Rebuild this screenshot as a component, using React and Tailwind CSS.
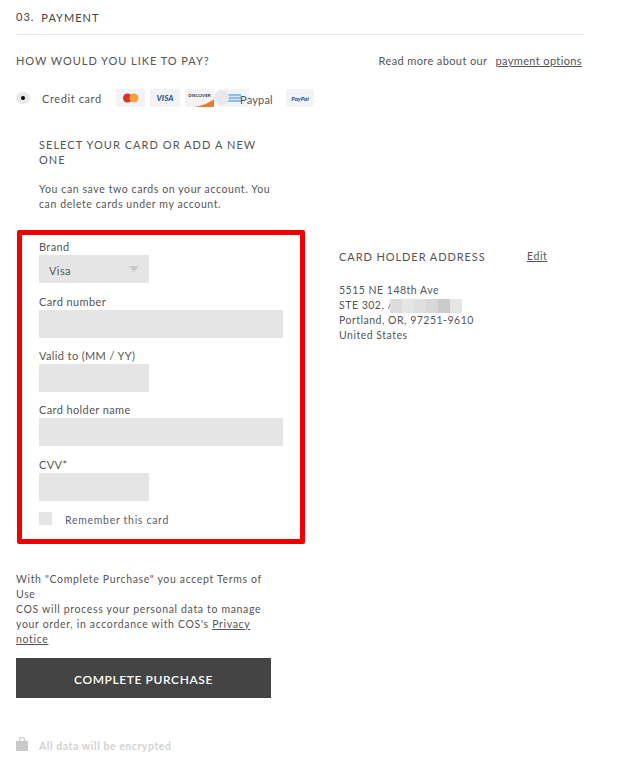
const font = { fontFamily: "Lato, 'Open Sans', sans-serif" };

function Field({ label, wide, gap, children }) {
  return (
    <div className={gap}>
      <div className="h-[16px] text-[11px] leading-[16px] tracking-[0.38px] text-[#555]">{label}</div>
      <div className={"h-[28px] bg-[#e5e5e5] " + (wide ? "w-[244px]" : "w-[110px]")}>{children}</div>
    </div>
  );
}

function CardChip({ className, children }) {
  return <div className={"relative h-[18px] overflow-hidden rounded-[1px] bg-[#f3f3f5] flex items-center justify-center " + className}>{children}</div>;
}

export default function App() {
  return (
    <div className="h-[760px] w-[622px] overflow-hidden bg-white pl-4 text-[#555]" style={font}>
      <div className="flex h-[35px] w-[568px] items-start border-b border-[#e6e6e6] pt-[11px] text-[11px] leading-[14px] tracking-[1px] text-[#444]">
        <span className="-mt-[1px] mr-[7px]">03.</span>
        <span>PAYMENT</span>
      </div>

      <div className="mt-[19px] flex h-[14px] w-[566px] items-center justify-between text-[11px] leading-[14px]">
        <span className="tracking-[0.95px]">HOW WOULD YOU LIKE TO PAY?</span>
        <span className="tracking-[0.38px]">
          Read more about our <a className="ml-[5px] underline">payment options</a>
        </span>
      </div>

      <div className="relative mt-[21px] flex h-[18px] items-center">
        <div className="flex h-[12px] w-[14px] items-center justify-center rounded-full bg-[#e9e9e9]">
          <div className="h-[4px] w-[4px] rounded-full bg-black" />
        </div>
        <span className="ml-[12px] mt-[2px] w-[74px] text-[11px] tracking-[0.6px]">Credit card</span>
        <CardChip className="w-[29px]">
          <svg width="18" height="10" viewBox="0 0 18 10">
            <circle cx="5.5" cy="5" r="4.5" fill="#d9322a" />
            <circle cx="12" cy="5" r="4.5" fill="#f3a13c" />
          </svg>
        </CardChip>
        <CardChip className="ml-[5px] w-[30px]">
          <span className="text-[8px] font-black italic text-[#2b5b94]">VISA</span>
        </CardChip>
        <CardChip className="ml-[5px] w-[29px]">
          <span className="text-[4.5px] font-bold leading-none text-[#333] -mt-[3px]">DISCOVER</span>
          <svg className="absolute bottom-0 right-0" width="20" height="8" viewBox="0 0 20 8">
            <path d="M0 8 C8 7 15 4 20 0 V8 Z" fill="#e77c2e" />
          </svg>
        </CardChip>
        <CardChip className="ml-[4px] w-[31px]">
          <svg className="-ml-[4px]" width="18" height="8" viewBox="0 0 18 8">
            <rect width="18" height="8" fill="#8ebde6" />
            <path d="M0 2.5H18M0 5.5H18" stroke="#d6e6f4" strokeWidth="1" />
          </svg>
        </CardChip>
        <div className="absolute left-[198px] top-[1px] h-[15px] w-[15px] rounded-full bg-[#e9e9e9]" />
        <span className="absolute left-[224px] top-[3px] text-[11px] leading-[16px] tracking-[0.2px]">Paypal</span>
        <CardChip className="ml-[37px] w-[28px]">
          <span className="text-[6px] font-black italic text-[#2b5b94]">PayPal</span>
        </CardChip>
      </div>

      <div className="ml-[23px] mt-[30px] w-[240px] text-[11px] leading-[15px] tracking-[1.05px]">
        SELECT YOUR CARD OR ADD A NEW ONE
      </div>
      <div className="ml-[23px] mt-[15px] w-[240px] text-[10.5px] leading-[15px] tracking-[0.6px]">
        You can save two cards on your account. You can delete cards under my account.
      </div>

      <div className="mt-[18px] flex items-start">
        <div className="ml-[1px] h-[314px] w-[288px] rounded-[2px] border-[5px] border-[#f00000] pl-[17px] pt-[4px]">
          <Field label="Brand" gap="mb-[11px]">
            <div className="relative flex h-full items-center pl-[10px] pt-[4px] text-[11px] tracking-[0.4px]">
              Visa
              <div className="absolute right-[10px] top-[11px] h-0 w-0 border-x-[5px] border-t-[6px] border-x-transparent border-t-[#c9c9c9]" />
            </div>
          </Field>
          <Field label="Card number" wide gap="mb-[10px]" />
          <Field label="Valid to (MM / YY)" gap="mb-[10px]" />
          <Field label="Card holder name" wide gap="mb-[11px]" />
          <Field label="CVV*" gap="mb-[11px]" />
          <div className="flex h-[13px] items-center">
            <div className="h-[13px] w-[13px] bg-[#e5e5e5]" />
            <span className="ml-[13px] mt-[5px] text-[10.5px] tracking-[0.7px] text-[#5a6270]">Remember this card</span>
          </div>
        </div>

        <div className="ml-[34px] pt-[19px] text-[10.5px] leading-[15px]">
          <div className="flex h-[15px] items-center">
            <span className="w-[188px] text-[11px] tracking-[0.92px]">CARD HOLDER ADDRESS</span>
            <a className="tracking-[0.6px] underline">Edit</a>
          </div>
          <div className="mt-[19px] tracking-[0.5px]">
            <div>5515 NE 148th Ave</div>
            <div className="flex items-center">
              STE 302, /
              <div className="-ml-[3px] flex h-[14px]">
                <div className="w-[12px] bg-[#dcdcdc]" />
                <div className="w-[12px] bg-[#e4e6e2]" />
                <div className="w-[12px] bg-[#dfdfdf]" />
                <div className="w-[12px] bg-[#d8d8d8]" />
                <div className="w-[12px] bg-[#cbcbcb]" />
                <div className="w-[12px] bg-[#e6e6e6]" />
              </div>
            </div>
            <div>Portland, OR, 97251-9610</div>
            <div>United States</div>
          </div>
        </div>
      </div>

      <div className="mt-[28px] w-[255px] text-[10.5px] leading-[15px] tracking-[0.66px]">
        With "Complete Purchase" you accept Terms of Use
        <br />
        COS will process your personal data to manage your order, in accordance with COS's <a className="underline">Privacy</a>
        <br />
        <a className="underline">notice</a>
      </div>

      <button className="mt-[11px] block h-[40px] w-[255px] bg-[#444444] text-center text-[12px] font-semibold leading-[44px] tracking-[0.6px] text-white">
        COMPLETE PURCHASE
      </button>

      <div className="mt-[39px] flex h-[14px] items-center">
        <svg width="12" height="14" viewBox="0 0 12 14">
          <path d="M3.5 4V2.5C3.5 1.2 4.5.5 6 .5s2.5.7 2.5 2V4" fill="none" stroke="#c8c8c8" strokeWidth="1.2" />
          <rect x="0" y="4" width="12" height="10" fill="#c8c8c8" />
        </svg>
        <span className="ml-[11px] mt-[5px] text-[10.5px] font-bold tracking-[0.55px] text-[#d2d2d2]">All data will be encrypted</span>
      </div>
    </div>
  );
}
